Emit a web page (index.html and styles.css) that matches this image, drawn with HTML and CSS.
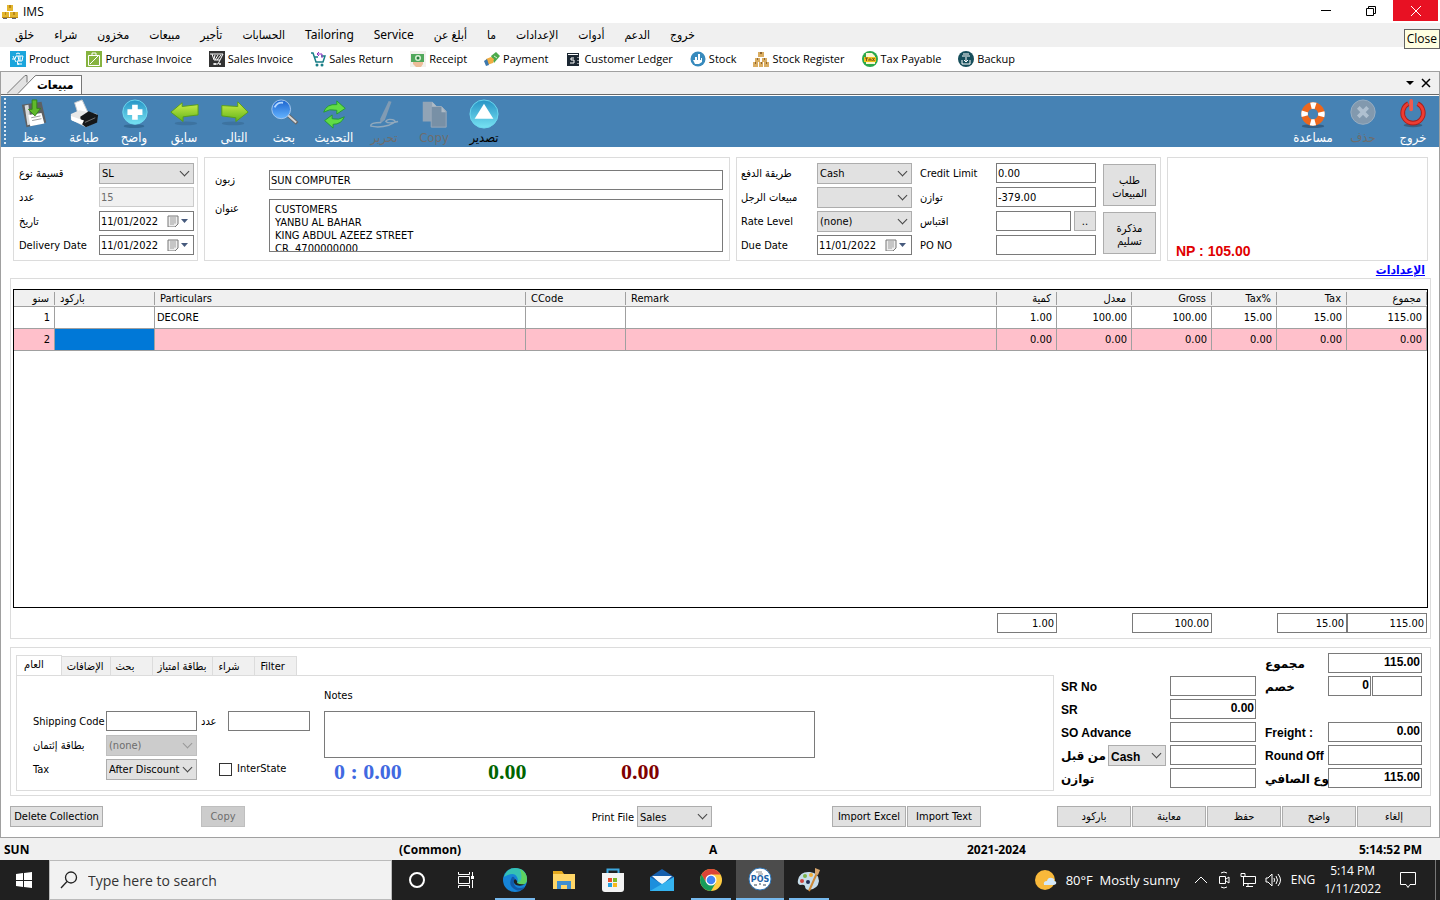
FILE: index.html
```html
<!DOCTYPE html>
<html lang="en">
<head>
  <meta charset="UTF-8" />
  <meta name="viewport" content="width=device-width, initial-scale=1.0"/>
  <title>IMS</title>
  <link rel="stylesheet" href="styles.css">
</head>
<body>
  <header class="titlebar">
    <svg class="app-icon" viewBox="0 0 16 16"><path fill="#e3b62f" d="M5 1h6v6H5zM0 8h7v6H0zM8 8h8v6H8z"/><path fill="#b98718" d="M7 1h2v3H7zM3 8h1v3H3zM11 8h2v3h-2zM0 13h16v1H0z"/><path fill="#5d6570" d="M1 14h4v1H1zM10 14h4v1h-4z"/></svg>
    <span class="app-title">IMS</span>
    <div class="window-controls">
      <button aria-label="Minimize"><svg width="12" height="12" viewBox="0 0 12 12"><path d="M1 5.500h10" stroke="#000"/></svg></button>
      <button aria-label="Restore"><svg width="12" height="12" viewBox="0 0 12 12"><path d="M1.500 3.500h7v7h-7zM3.500 3v-1.500h7v7H9" fill="none" stroke="#000"/></svg></button>
      <button class="close" aria-label="Close"><svg width="12" height="12" viewBox="0 0 12 12"><path d="M1 1l10 10M11 1L1 11" stroke="#fff"/></svg></button>
    </div>
    <div class="tooltip">Close</div>
  </header>

  <nav class="menu">
    <a href="#">خلق</a>
    <a href="#">شراء</a>
    <a href="#">مخزون</a>
    <a href="#">مبيعات</a>
    <a href="#">تأجير</a>
    <a href="#">الحسابات</a>
    <a href="#">Tailoring</a>
    <a href="#">Service</a>
    <a href="#">أبلغ عن</a>
    <a href="#">ما</a>
    <a href="#">الإعدادات</a>
    <a href="#">أدوات</a>
    <a href="#">الدعم</a>
    <a href="#">خروج</a>
  </nav>

  <nav class="quick">
    <button><svg viewBox="0 0 16 16"><path fill="#1ba5dc" d="M0 0h16v16H0z"/><path d="M2 8h3l1-3h7l-1 5H7l1 3h4M8 5l1 5M10 5v5M3 5l3 6M6 3l2-1 2 1" fill="none" stroke="#fff"/><circle cx="8" cy="13" r="1" fill="#fff"/></svg>Product</button>
    <button><svg viewBox="0 0 16 16"><path fill="#86b340" d="M0 0h16v16H0z"/><path d="M2.500 4.500h11v10h-11zM6 4V2h4v2M4 13l8-8" fill="none" stroke="#fff"/></svg>Purchase Invoice</button>
    <button><svg viewBox="0 0 16 16"><path fill="#333" d="M0 0h16v16H0z"/><path d="M1 3h13l-5 10H4M3 3l2 6h6M6 4l-1 4M9 4l-3 5M12 4l-4 5" fill="none" stroke="#fff"/><circle cx="6" cy="13" r="1" fill="#fff"/><circle cx="11" cy="13" r="1" fill="#fff"/></svg>Sales Invoice</button>
    <button><svg viewBox="0 0 16 16"><path d="M1 2h2l3 9h7l2-6h-4M4 6h4" fill="none" stroke="#187e86" stroke-width="1.500"/><path d="M12 7V3H7M9 1L7 3l2 2" fill="none" stroke="#8e2bbd"/><circle cx="7" cy="14" r="1.500" fill="#187e86"/><circle cx="12" cy="14" r="1.500" fill="#187e86"/></svg>Sales Return</button>
    <button><svg viewBox="0 0 16 16"><path fill="#f3f1ed" d="M0 0h16v16H0z"/><path fill="#edbd99" d="M3 8h10v5l-2 3H6l-3-3z"/><path fill="#51a85b" d="M1 3h13v8H1z"/><circle cx="8" cy="7" r="3" fill="#d9f0d4"/><circle cx="8" cy="7" r="1.500" fill="#277c3c"/></svg>Receipt</button>
    <button><svg viewBox="0 0 16 16"><path fill="#4caa4b" d="M7 5l5-4 4 4-6 7z"/><path d="M10 5l3 2" stroke="#d5efcd"/><path fill="#f0ad42" d="M2 8l5-2 3 2-1 4-6 2z"/><path fill="#3d78ad" d="M0 10l3-2 2 6-3 1z"/></svg>Payment</button>
    <button><svg viewBox="0 0 16 16"><path fill="#1c2833" d="M2 2h12v13H2z"/><path d="M3 3.500h10" stroke="#fff"/><path d="M9 7H6v2h3v3H5" fill="none" stroke="#fff"/><path d="M13 6v1M13 9v1M13 12v1" stroke="#fff"/></svg>Customer Ledger</button>
    <button><svg viewBox="0 0 16 16"><circle cx="8" cy="8" r="7.500" fill="#378abd"/><path fill="#fff" d="M3 9h2V6h2v3h1V3h2v6h1V7h1v4l-3 2H5z"/></svg>Stock</button>
    <button><svg viewBox="0 0 16 16"><path fill="#d9ad62" d="M5 1h6v5H5zM2 7h5v4H2zM9 7h5v4H9zM0 11h5v5H0zM6 11h4v5H6zM11 11h5v5h-5z"/><path fill="#8f642d" d="M7 1h2v2H7zM4 7h1v2H4zM11 7h1v2h-1zM2 11h1v2H2zM8 11h1v2H8zM13 11h1v2h-1z"/></svg>Stock Register</button>
    <button><svg viewBox="0 0 16 16"><circle cx="8" cy="8" r="8" fill="#2ba94b"/><path fill="#fff7d2" d="M4 2h6l3 3v8H4z"/><path fill="#f2c31b" d="M2 6h12v5H2z"/><path d="M3 7h3M4.500 7v3M7 10V8h2v2M10.500 7l2 3M12.500 7l-2 3" stroke="#71531a" fill="none"/></svg>Tax Payable</button>
    <button><svg viewBox="0 0 16 16"><circle cx="8" cy="8" r="8" fill="#164e5b"/><path d="M4 5h8M5 3h6M8 6v5M6 9l2 2 2-2M4 9v4h8V9" fill="none" stroke="#fff"/></svg>Backup</button>
  </nav>

  <main class="window">
    <div class="doc-tabs">
      <svg class="doc-slant" viewBox="0 0 30 20"><path fill="#e2e2e2" d="M0 20L18 1h2v19z"/><path fill="#fff" d="M11 20L28 2q1-1 2-1v19z"/><path d="M0 19.500L18 1.500h2v7M11 19.500L28 2q1-1 2-.500" fill="none" stroke="#777"/></svg>
      <button class="doc-tab">مبيعات</button>
      <div class="doc-controls">
        <button aria-label="Windows"><svg width="8" height="5" viewBox="0 0 8 5"><path d="M0 0h8L4 4z"/></svg></button>
        <button aria-label="Close tab"><svg width="10" height="10" viewBox="0 0 10 10"><path d="M1 1l8 8M9 1L1 9" stroke="#000" stroke-width="1.500"/></svg></button>
      </div>
    </div>

    <div class="toolbar">
      <span class="grip"></span>
      <button><svg viewBox="0 0 32 32"><path fill="#5d6063" d="M3 6l21-3 5 22-21 5z"/><path fill="#d8dadb" d="M6 7l4-1 3 21-4 1z"/><path fill="#fff" d="M10 17l14-2 3 11-15 3z"/><path d="M13 20l10-2M14 23l10-2" stroke="#999"/><path fill="#60b92b" stroke="#328616" d="M14 1h5v9h4l-6 8-7-7h4z"/></svg>حفظ</button>
      <button><svg viewBox="0 0 32 32"><path fill="#fff" stroke="#ccc" d="M6 4l8-3 6 13-10 3z"/><path fill="#e7e7e7" d="M2 16l9-4 19 4v8l-12 6L2 22z"/><path fill="#151719" d="M12 19l9-6 10 4-1 8-12 5-5-4z"/><path fill="#fff" d="M2 18l14 5-2 4-11-4z"/><path d="M17 25l11-5" stroke="#777"/></svg>طباعة</button>
      <button><svg viewBox="0 0 32 32"><ellipse cx="16" cy="29" rx="11" ry="2" fill="#356a96"/><circle cx="17" cy="14" r="13" fill="url(#cyan)" stroke="#6dd9ef"/><path fill="#fff" d="M14 6h6v5h5v6h-5v5h-6v-5H9v-6h5z"/></svg>واضح</button>
      <button><svg viewBox="0 0 32 32"><ellipse cx="18" cy="26" rx="12" ry="2" fill="#3d73a0"/><path fill="url(#lime)" stroke="#599d18" d="M2 14L14 4v4l17-2v11l-16 2v5z"/></svg>سابق</button>
      <button><svg viewBox="0 0 32 32"><ellipse cx="15" cy="26" rx="12" ry="2" fill="#3d73a0"/><path fill="url(#lime)" stroke="#599d18" d="M31 14L20 3v5L3 7v11l15 2v4z"/></svg>التالى</button>
      <button><svg viewBox="0 0 32 32"><path d="M20 17l10 9" stroke="#666" stroke-width="4"/><path d="M20 17l9 8" stroke="#d8d8d8" stroke-width="2"/><circle cx="13" cy="11" r="10" fill="url(#blue)" stroke="#a8c9ef"/><path d="M6 9q3-6 9-5" fill="none" stroke="#b1d7ff" stroke-width="2"/></svg>بحث</button>
      <button><svg viewBox="0 0 32 32"><path fill="#61dc45" stroke="#249b32" d="M5 14q3-9 14-8V2l9 8-9 6v-4q-8-2-14 2zM27 19q-3 8-12 8v4l-9-8 8-6v4q7 2 13-2z"/></svg>التحديث</button>
      <button class="off" disabled><svg viewBox="0 0 32 32"><path fill="#819bb3" d="M12 21L21 2l3 1-7 19-5 4z"/><path d="M13 25q-12 0-11 4 9 2 19-1 11-4 4-6-6-1-7 2 3 3 13 0" fill="none" stroke="#91a9bd" stroke-width="1.500"/></svg>تحرير</button>
      <button class="off" disabled><svg viewBox="0 0 32 32"><path fill="#91a4b6" d="M4 3h10l5 5v16H4z"/><path fill="#7890a6" stroke="#9aaaba" d="M13 8h11l5 5v17H13z"/><path fill="#afbbc6" d="M24 8v6h5zM14 3v5h5z"/></svg>Copy</button>
      <button class="dark"><svg viewBox="0 0 32 32"><circle cx="16" cy="16" r="15" fill="url(#cyan)" stroke="#6dd9ef"/><path fill="#fff" d="M16 5l10 16H6z"/></svg>تصدير</button>
      <span class="spacer"></span>
      <button><svg viewBox="0 0 32 32"><ellipse cx="16" cy="29" rx="12" ry="2" fill="#315f87"/><circle cx="16" cy="16" r="9" fill="none" stroke="#ed671c" stroke-width="7"/><circle cx="16" cy="16" r="9" fill="none" stroke="#fff" stroke-width="7" stroke-dasharray="5 9.137" stroke-dashoffset="2.500"/></svg>مساعدة</button>
      <button class="off" disabled><svg viewBox="0 0 32 32"><circle cx="16" cy="14" r="13" fill="#8299ae" stroke="#9aafc2"/><path d="M11 9l10 10M21 9L11 19" stroke="#afc0d0" stroke-width="4"/></svg>حذف</button>
      <button><svg viewBox="0 0 32 32"><ellipse cx="16" cy="28" rx="10" ry="2" fill="#3a6082"/><path d="M11 5a11 11 0 1 0 10 0" fill="none" stroke="#a91f1c" stroke-width="5"/><path d="M11 5a11 11 0 1 0 10 0" fill="none" stroke="#ed3c32" stroke-width="3"/><path d="M14 2v9" stroke="#ef5b4e" stroke-width="4" stroke-linecap="round"/></svg>خروج</button>
    </div>

    <div class="content">
      <section class="panels">
        <div class="panel voucher">
          <label for="vtype">قسيمة نوع</label>
          <span class="combo"><select id="vtype"><option>SL</option></select></span>
          <label for="number">عدد</label>
          <input id="number" value="15" disabled>
          <label for="date">تاريخ</label>
          <span class="date"><input id="date" value="11/01/2022"><svg viewBox="0 0 22 12"><path d="M1 1h10v8l-3 3H1z" fill="#eee" stroke="#777"/><path d="M3 3h6M3 5h6M3 7h6M3 9h4M4 2v8M6 2v8M8 2v7" stroke="#aaa" stroke-width=".700"/><path d="M14 4h7l-3.500 4z" fill="#465a7d"/></svg></span>
          <label for="delivery">Delivery Date</label>
          <span class="date"><input id="delivery" value="11/01/2022"><svg viewBox="0 0 22 12"><path d="M1 1h10v8l-3 3H1z" fill="#eee" stroke="#777"/><path d="M3 3h6M3 5h6M3 7h6M3 9h4M4 2v8M6 2v8M8 2v7" stroke="#aaa" stroke-width=".700"/><path d="M14 4h7l-3.500 4z" fill="#465a7d"/></svg></span>
        </div>

        <div class="panel customer">
          <label for="customer">زبون</label>
          <input id="customer" value="SUN COMPUTER">
          <label for="address">عنوان</label>
          <textarea id="address">CUSTOMERS
YANBU AL BAHAR
KING ABDUL AZEEZ STREET
CR  4700000000</textarea>
        </div>

        <div class="panel payment">
          <div class="payment-fields">
            <label for="paymode">طريقة الدفع</label>
            <span class="combo"><select id="paymode"><option>Cash</option></select></span>
            <label for="credit" class="second">Credit Limit</label>
            <input id="credit" value="0.00">
            <label for="salesman">مبيعات الرجل</label>
            <span class="combo"><select id="salesman"><option></option></select></span>
            <label for="balance" class="second">توازن</label>
            <input id="balance" value="-379.00">
            <label for="rate">Rate Level</label>
            <span class="combo"><select id="rate"><option>(none)</option></select></span>
            <label for="quote" class="second">اقتباس</label>
            <span class="quote"><input id="quote"><button class="btn">..</button></span>
            <label for="due">Due Date</label>
            <span class="date"><input id="due" value="11/01/2022"><svg viewBox="0 0 22 12"><path d="M1 1h10v8l-3 3H1z" fill="#eee" stroke="#777"/><path d="M3 3h6M3 5h6M3 7h6M3 9h4M4 2v8M6 2v8M8 2v7" stroke="#aaa" stroke-width=".700"/><path d="M14 4h7l-3.500 4z" fill="#465a7d"/></svg></span>
            <label for="po" class="second">PO NO</label>
            <input id="po">
          </div>
          <div class="payment-buttons">
            <button class="btn">طلب المبيعات</button>
            <button class="btn">مذكرة تسليم</button>
          </div>
        </div>

        <div class="panel profit">NP : 105.00</div>
      </section>

      <div class="settings"><a href="#">الإعدادات</a></div>

      <section class="items">
        <div class="grid">
          <table>
            <colgroup>
              <col class="c-no"><col class="c-100"><col><col class="c-100"><col>
              <col class="c-60"><col class="c-75"><col class="c-80"><col class="c-65"><col class="c-70"><col class="c-80">
            </colgroup>
            <thead>
              <tr>
                <th class="num">سنو</th><th>باركود</th><th>Particulars</th><th>CCode</th><th>Remark</th>
                <th class="num">كمية</th><th class="num">معدل</th><th class="num">Gross</th><th class="num">Tax%</th><th class="num">Tax</th><th class="num">مجموع</th>
              </tr>
            </thead>
            <tbody>
              <tr>
                <td class="num">1</td><td></td><td>DECORE</td><td></td><td></td>
                <td class="num">1.00</td><td class="num">100.00</td><td class="num">100.00</td><td class="num">15.00</td><td class="num">15.00</td><td class="num">115.00</td>
              </tr>
              <tr class="current">
                <td class="num">2</td><td class="selected"></td><td></td><td></td><td></td>
                <td class="num">0.00</td><td class="num">0.00</td><td class="num">0.00</td><td class="num">0.00</td><td class="num">0.00</td><td class="num">0.00</td>
              </tr>
            </tbody>
          </table>
        </div>
        <div class="sums">
          <input class="sum-qty" aria-label="Total quantity" value="1.00">
          <input class="sum-gross" aria-label="Total gross" value="100.00">
          <input class="sum-tax" aria-label="Total tax" value="15.00">
          <input class="sum-total" aria-label="Total" value="115.00">
        </div>
      </section>

      <section class="details">
        <div class="tabs">
          <div class="tab-list">
            <button class="tab active">العام</button>
            <button class="tab">الإضافات</button>
            <button class="tab">بحث</button>
            <button class="tab">بطاقة امتياز</button>
            <button class="tab">شراء</button>
            <button class="tab">Filter</button>
          </div>
          <div class="tab-page">
            <div class="shipping">
              <label for="ship">Shipping Code</label>
              <input id="ship">
              <label for="shipno" class="mid">عدد</label>
              <input id="shipno">
              <label for="card">بطاقة إئتمان</label>
              <span class="combo disabled"><select id="card" disabled><option>(none)</option></select></span>
              <label for="tax" class="tax-label">Tax</label>
              <span class="combo"><select id="tax"><option>After Discount</option></select></span>
              <span class="check"><input type="checkbox" id="inter"><label for="inter">InterState</label></span>
            </div>
            <div class="notes">
              <label for="notes">Notes</label>
              <textarea id="notes"></textarea>
              <div class="readouts">
                <span class="blue">0 : 0.00</span>
                <span class="green">0.00</span>
                <span class="maroon">0.00</span>
              </div>
            </div>
          </div>
        </div>

        <div class="totals">
          <div class="col-left">
            <label for="srno">SR No</label><input id="srno">
            <label for="sr">SR</label><input id="sr" value="0.00">
            <label for="so">SO Advance</label><input id="so">
            <div class="paid"><label for="paid">دفعات من قبل</label><span class="combo"><select aria-label="Paid by"><option>Cash</option></select></span></div><input id="paid">
            <label for="bal">توازن</label><input id="bal">
          </div>
          <div class="col-right">
            <label for="sum">مجموع</label><input id="sum" value="115.00">
            <label for="disc">خصم</label>
            <span class="discount"><input id="disc" value="0"><input aria-label="Discount amount"></span>
            <span class="blank"></span>
            <label for="freight">Freight :</label><input id="freight" value="0.00">
            <label for="round">Round Off</label><input id="round">
            <label for="net">مجموع الصافي</label><input id="net" value="115.00">
          </div>
        </div>
      </section>

      <footer class="actions">
        <button class="btn delete">Delete Collection</button>
        <button class="btn copy" disabled>Copy</button>
        <span class="print"><label for="print">Print File</label><span class="combo"><select id="print"><option>Sales</option></select></span></span>
        <div class="imports">
          <button class="btn">Import Excel</button>
          <button class="btn">Import Text</button>
        </div>
        <div class="commands">
          <button class="btn">باركود</button>
          <button class="btn">معاينة</button>
          <button class="btn">حفظ</button>
          <button class="btn">واضح</button>
          <button class="btn">إلغاء</button>
        </div>
      </footer>
    </div>
  </main>

  <div class="status">
    <span>SUN</span><span>(Common)</span><span>A</span><span>2021-2024</span><span>5:14:52 PM</span>
  </div>

  <div class="taskbar">
    <button class="task" aria-label="Start"><svg width="16" height="16" viewBox="0 0 16 16"><path fill="#fff" d="M0 2l7-1v7H0zM8 1l8-1v8H8zM0 9h7v6l-7-1zM8 9h8v7l-8-1z"/></svg></button>
    <div class="search">
      <svg width="18" height="18" viewBox="0 0 18 18"><circle cx="11" cy="6.500" r="5.500" fill="none" stroke="#222" stroke-width="1.300"/><path d="M7 10.500L1 17" stroke="#222" stroke-width="1.300"/></svg>
      <input placeholder="Type here to search" aria-label="Search">
    </div>
    <button class="task" aria-label="Cortana"><svg width="18" height="18" viewBox="0 0 18 18"><circle cx="9" cy="9" r="7" fill="none" stroke="#fff" stroke-width="2"/></svg></button>
    <button class="task" aria-label="Task view"><svg width="18" height="18" viewBox="0 0 18 18"><path d="M1.500 1v2.500h11V1M1.500 5.500h11v7h-11zM1.500 17v-2.500h11V17M15.500 1v4M15.500 9v8" fill="none" stroke="#fff"/><path fill="#fff" d="M14 5h3v3h-3z"/></svg></button>
    <button class="task open" aria-label="Edge"><svg width="24" height="24" viewBox="0 0 24 24"><circle cx="12" cy="12" r="12" fill="#1684d7"/><path fill="#35c1b4" d="M1 9Q4 0 12 0q11 0 12 11 0 6-7 6-4 0-4-2 3-2 1-6-3-6-13 0z"/><path fill="#5ed25f" d="M17 1q7 4 7 10 0 6-7 6-4 0-3-2 7-1 3-14z"/><path fill="#1159a8" d="M9 9q-5 9 4 13 5 2 9-3-9 3-11-3-1-3 1-5-1-3-3-2z"/><path fill="#202020" d="M12 11q-3 3 1 6 5 2 9-1-5 1-8-1 1-2-2-4z"/></svg></button>
    <button class="task" aria-label="File Explorer"><svg width="22" height="20" viewBox="0 0 22 20"><path fill="#e5a91d" d="M0 1h9l2 3h11v4H0z"/><path fill="#ffd667" d="M0 4h22v15H0z"/><path fill="#3e8ed0" d="M4 11h14v8h-4v-4H8v4H4z"/></svg></button>
    <button class="task" aria-label="Store"><svg width="24" height="24" viewBox="0 0 24 24"><path d="M6.500 6V1.500h11V6" fill="none" stroke="#3ca8df" stroke-width="2"/><path fill="#f3f3f3" d="M1 5h22v16q0 3-3 3H4q-3 0-3-3z"/><path fill="#e84e2d" d="M7 10h4v4H7z"/><path fill="#7cb928" d="M12 10h4v4h-4z"/><path fill="#23a1e2" d="M7 15h4v4H7z"/><path fill="#f8b91c" d="M12 15h4v4h-4z"/></svg></button>
    <button class="task" aria-label="Mail"><svg width="24" height="22" viewBox="0 0 24 22"><path fill="#155eac" d="M0 8l12-8 12 8v5H0z"/><path fill="#f4f8fb" d="M2 7h20l-10 9z"/><path fill="#1c8fdd" d="M0 8l24 14H0z"/><path fill="#35b3ef" d="M24 8v14H0z"/></svg></button>
    <button class="task open" aria-label="Chrome"><svg width="22" height="22" viewBox="0 0 22 22"><circle cx="11" cy="11" r="11" fill="#ffcd42"/><path fill="#dc4437" d="M1.500 5.500A11 11 0 0 1 20.500 5.500H11L6.200 13.700z"/><path fill="#179c5b" d="M1.500 5.500A11 11 0 0 0 11 22l4.800-8.300-9.500 0z"/><circle cx="11" cy="11" r="5.500" fill="#fff"/><circle cx="11" cy="11" r="4.300" fill="#4285f4"/></svg></button>
    <button class="task current" aria-label="POS"><svg width="24" height="24" viewBox="0 0 24 24"><circle cx="12" cy="12" r="11" fill="#fff" stroke="#2e76b9"/><path d="M8 5h6M10 7h5" stroke="#888"/><text x="12" y="15" text-anchor="middle" class="pos-text">POS</text><path d="M6 18h3M11 17h2M15 18h3" stroke="#345"/></svg></button>
    <button class="task open" aria-label="Paint"><svg width="24" height="24" viewBox="0 0 24 24"><path fill="#c7ddea" d="M1 12Q3 3 13 4q9 1 9 9-1 8-10 9-4 0-4-4-1-2-5-1-3-1-2-5z"/><circle cx="5" cy="13" r="2" fill="#cf4640"/><circle cx="8" cy="8" r="2" fill="#7bb449"/><circle cx="14" cy="7" r="2" fill="#f1ae3b"/><circle cx="11" cy="14" r="2" fill="#202c55"/><path d="M12 23l8-18" stroke="#ce8a39" stroke-width="2"/><path fill="#d7a56d" d="M18 0l5 2-2 5-3-1z"/></svg></button>
    <div class="tray">
      <svg width="22" height="20" viewBox="0 0 22 20"><circle cx="10" cy="10" r="10" fill="#f8b83a"/><path fill="#d4e8f8" d="M9 15q-1-4 3-4 1-4 5-3 3 1 2 3 3 0 2 3l-2 1z"/></svg>
      <span class="weather">80°F&nbsp; Mostly sunny</span>
      <svg width="14" height="14" viewBox="0 0 14 14"><path d="M1 10l6-6 6 6" fill="none" stroke="#fff"/></svg>
      <svg width="14" height="18" viewBox="0 0 14 18"><path d="M2.500 5.500h6v7h-6zM9 8l3-2v6l-3-2M4 2q3-2 6 0M4 16q3 2 6 0" fill="none" stroke="#fff"/></svg>
      <svg width="16" height="16" viewBox="0 0 16 16"><path d="M4 4.500h11.500v7H4M1 1.500h4v3H1zM3.500 5v9M8 12v2M6 14.500h7" fill="none" stroke="#fff"/></svg>
      <svg width="17" height="16" viewBox="0 0 17 16"><path d="M1 6h2l4-4v12l-4-4H1zM9 6q1 2 0 4M11 4q3 4 0 8M13 2q5 6 0 12" fill="none" stroke="#fff"/></svg>
      <span class="lang">ENG</span>
      <span class="clock"><span>5:14 PM</span><span>1/11/2022</span></span>
      <svg class="notify" width="18" height="18" viewBox="0 0 18 18"><path d="M1.500 1.500h15v12H11l-2 3-2-3H1.500z" fill="none" stroke="#fff"/></svg>
      <span class="desktop"></span>
    </div>
  </div>

  <!-- shared gradients for the toolbar icons -->
  <svg class="defs" width="0" height="0">
    <defs>
      <linearGradient id="cyan" x1="0" y1="0" x2="0" y2="1"><stop offset="0" stop-color="#2693c5"/><stop offset="1" stop-color="#77e2f2"/></linearGradient>
      <linearGradient id="lime" x1="0" y1="0" x2="0" y2="1"><stop offset="0" stop-color="#cdee4a"/><stop offset="1" stop-color="#62b51b"/></linearGradient>
      <linearGradient id="blue" x1="0" y1="0" x2="0" y2="1"><stop offset="0" stop-color="#1a63cf"/><stop offset="1" stop-color="#65b4ff"/></linearGradient>
    </defs>
  </svg>
</body>
</html>
```

FILE: styles.css
```css
* {
  box-sizing: border-box;
}

body {
  margin: 0;
  min-height: 100vh;
  display: flex;
  flex-direction: column;
  background: #fff;
  color: #000;
  font-family: "DejaVu Sans Condensed", "DejaVu Sans", sans-serif;
  font-size: 11px;
  line-height: 14px;
}

button,
input,
select,
textarea {
  font: inherit;
  color: inherit;
  margin: 0;
  border-radius: 0;
}

button {
  border: none;
  background: none;
  padding: 0;
}

svg {
  flex: none;
  display: block;
}

label {
  padding-top: 2px;
  white-space: nowrap;
}

/* title bar */
.titlebar {
  position: relative;
  display: flex;
  align-items: center;
  height: 23px;
  padding-left: 2px;
  font-family: "Open Sans", sans-serif;
  font-size: 12px;
}

.app-icon {
  width: 16px;
  height: 16px;
  margin-right: 5px;
}

.window-controls {
  display: flex;
  align-self: flex-start;
  margin-left: auto;
  padding-right: 2px;
}

.window-controls button {
  display: flex;
  justify-content: center;
  align-items: center;
  width: 45px;
  height: 21px;
}

.window-controls .close {
  background: #e81123;
}

.tooltip {
  position: absolute;
  top: 29px;
  right: 0;
  z-index: 2;
  padding: 2px;
  border: 1px solid #646464;
  background: #ffffe1;
}

/* menus */
.menu {
  display: flex;
  align-items: center;
  gap: 20px;
  height: 24px;
  padding-left: 15px;
  background: #f0f0f0;
  font-family: "Noto Sans", "DejaVu Sans Condensed", sans-serif;
  font-size: 12px;
}

.menu a {
  color: #000;
  text-decoration: none;
}

.quick {
  display: flex;
  align-items: center;
  gap: 17px;
  height: 24px;
  padding-left: 10px;
  font-family: "Open Sans", sans-serif;
  font-size: 11px;
}

.quick button {
  display: flex;
  align-items: center;
  gap: 3px;
  white-space: nowrap;
}

.quick svg {
  width: 16px;
  height: 16px;
}

/* document window */
.window {
  flex: 1;
  display: flex;
  flex-direction: column;
  border: 1px solid #a0a0a0;
}

.doc-tabs {
  display: flex;
  align-items: flex-end;
  height: 23px;
  padding-left: 6px;
  border-bottom: 1px solid #696969;
  background: #f0f0f0;
}

.doc-slant {
  width: 30px;
  height: 20px;
}

.doc-tab {
  height: 19px;
  padding: 0 7px 0 0;
  border-top: 1px solid #777;
  border-right: 1px solid #777;
  background: #fff;
  font-size: 12px;
  font-weight: bold;
}

.doc-controls {
  display: flex;
  align-items: center;
  align-self: center;
  gap: 7px;
  margin-left: auto;
  padding-right: 8px;
}

.toolbar {
  display: flex;
  height: 52px;
  padding-right: 1px;
  border-top: 1px solid #fff;
  background: #4682b4;
}

.grip {
  width: 2px;
  height: 46px;
  margin: 2px 3px;
  background: repeating-linear-gradient(#dbe8f3 0 2px, #4682b4 2px 4px);
}

.toolbar button {
  display: flex;
  flex-direction: column;
  align-items: center;
  gap: 2px;
  width: 50px;
  padding-top: 3px;
  color: #fff;
  font-size: 13px;
}

.toolbar button svg {
  width: 30px;
  height: 30px;
}

.toolbar .off {
  color: #6d6d6d;
}

.toolbar .dark {
  color: #000;
}

.spacer {
  flex: 1;
}

.content {
  flex: 1;
  display: flex;
  flex-direction: column;
  padding: 10px 8px 0 9px;
}

/* form controls */
input,
textarea {
  min-width: 0;
  width: 100%;
  height: 20px;
  padding: 0 2px 0 1px;
  border: 1px solid #7a7a7a;
  background: #fff;
}

input:disabled {
  border-color: #ccc;
  background: #f0f0f0;
  color: #6d6d6d;
}

textarea {
  display: block;
  resize: none;
  overflow: hidden;
}

.combo {
  position: relative;
  display: block;
  height: 21px;
}

.combo select {
  appearance: none;
  width: 100%;
  height: 100%;
  padding: 2px 16px 0 2px;
  border: 1px solid #adadad;
  background: #e1e1e1;
}

.combo::after {
  content: "";
  position: absolute;
  top: 5px;
  right: 6px;
  width: 6px;
  height: 6px;
  border: solid #444;
  border-width: 0 1px 1px 0;
  transform: rotate(45deg);
}

.combo select:disabled {
  border-color: #bfbfbf;
  background: #ccc;
  color: #6d6d6d;
  opacity: 1;
}

.combo.disabled::after {
  border-color: #999;
}

.date {
  display: flex;
  align-items: center;
  height: 20px;
  padding-right: 4px;
  border: 1px solid #7a7a7a;
}

.date input {
  height: 18px;
  padding: 1px 1px 0;
  border: none;
}

.date svg {
  width: 22px;
  height: 12px;
}

.btn {
  height: 21px;
  padding-top: 1px;
  border: 1px solid #adadad;
  background: #e1e1e1;
  white-space: nowrap;
}

.btn:disabled {
  border-color: #bfbfbf;
  background: #ccc;
  color: #6d6d6d;
}

/* top panels */
.panels {
  display: flex;
  gap: 6px;
  padding: 0 3px;
}

.panel {
  height: 104px;
  border: 1px solid #dcdcdc;
}

.voucher {
  display: grid;
  grid-template-columns: 80px 95px;
  grid-auto-rows: 20px;
  row-gap: 4px;
  align-items: center;
  padding: 5px 3px 0 5px;
}

.customer {
  flex: 1;
  display: grid;
  grid-template-columns: 54px 1fr;
  grid-template-rows: 20px 53px;
  row-gap: 9px;
  padding: 12px 6px 0 10px;
}

.customer textarea {
  height: 53px;
  padding: 3px 5px 0;
  line-height: 13px;
}

.customer label {
  padding-top: 3px;
}

.payment {
  display: flex;
  gap: 7px;
  padding: 5px 4px 0;
}

.payment-fields {
  display: grid;
  grid-template-columns: 76px 95px 84px 100px;
  grid-auto-rows: 20px;
  row-gap: 4px;
  align-items: center;
}

.second {
  padding-left: 8px;
}

.quote {
  display: flex;
  gap: 3px;
}

.quote .btn {
  flex: none;
  width: 22px;
  height: 20px;
}

.payment-buttons {
  display: flex;
  flex-direction: column;
  gap: 6px;
  padding-top: 1px;
}

.payment-buttons .btn {
  width: 53px;
  height: 42px;
  padding-top: 3px;
  line-height: 13px;
  white-space: normal;
}

.profit {
  display: flex;
  align-items: flex-end;
  width: 261px;
  padding: 0 8px 2px;
  color: #e00000;
  font-family: "Liberation Sans", sans-serif;
  font-size: 14px;
  font-weight: bold;
}

.settings {
  height: 17px;
  padding: 2px 6px 0;
  font-size: 12px;
  font-weight: bold;
  text-align: right;
}

.settings a {
  color: #00f;
}

/* items grid */
.items {
  flex: 1;
  display: flex;
  flex-direction: column;
  padding: 10px 2px 5px;
  border: 1px solid #dcdcdc;
}

.grid {
  flex: 1;
  min-height: 200px;
  border: 1px solid #000;
}

table {
  width: 100%;
  table-layout: fixed;
  border-collapse: separate;
  border-spacing: 0;
}

.c-no { width: 41px; }
.c-60 { width: 60px; }
.c-65 { width: 65px; }
.c-70 { width: 70px; }
.c-75 { width: 75px; }
.c-80 { width: 80px; }
.c-100 { width: 100px; }

th {
  height: 17px;
  padding: 2px 6px 0 5px;
  border-bottom: 1px solid #a0a0a0;
  background: linear-gradient(#a0a0a0, #a0a0a0) right 2px / 1px 13px no-repeat #f0f0f0;
  font-weight: normal;
  line-height: 14px;
  text-align: left;
}

td {
  height: 22px;
  padding: 1px 4px 0 2px;
  border-right: 1px solid #a0a0a0;
  border-bottom: 1px solid #a0a0a0;
}

.num {
  text-align: right;
}

.current td {
  background: #ffc0cb;
}

.current .selected {
  background: #0078d7;
}

.sums {
  display: grid;
  grid-template-columns: 1fr 60px 75px 80px 65px 70px 80px;
  padding: 5px 1px 0 0;
}

.sums input {
  text-align: right;
}

.sum-qty { grid-column: 2; }
.sum-gross { grid-column: 4; }
.sum-tax { grid-column: 6; }
.sum-total { grid-column: 7; }

/* details */
.details {
  display: flex;
  margin-top: 8px;
  padding: 5px 8px 4px 5px;
  border: 1px solid #dcdcdc;
}

.tabs {
  flex: 1;
  display: flex;
  flex-direction: column;
  padding-top: 2px;
}

.tab-list {
  display: flex;
  align-items: flex-end;
}

.tab {
  height: 19px;
  min-width: 42px;
  padding: 2px 6px 0 5px;
  border: 1px solid #dcdcdc;
  border-width: 1px 1px 0 0;
  background: #f0f0f0;
  text-align: left;
  white-space: nowrap;
}

.tab.active {
  height: 21px;
  margin-bottom: -1px;
  padding: 0 17px 2px 7px;
  border-width: 1px 1px 0 1px;
  background: #fff;
}

.tab-page {
  flex: 1;
  display: flex;
  gap: 14px;
  padding-left: 16px;
  border: 1px solid #dcdcdc;
}

.shipping {
  display: grid;
  grid-template-columns: 73px 91px 31px 82px;
  grid-auto-rows: 20px;
  row-gap: 4px;
  align-items: center;
  padding-top: 35px;
}

.mid {
  padding-left: 4px;
}

.tax-label {
  grid-column: 1;
}

.check {
  grid-column: 3 / 5;
  display: flex;
  align-items: center;
  gap: 5px;
  padding-left: 22px;
}

.check label {
  padding-top: 0;
}

.check input {
  appearance: none;
  flex: none;
  width: 13px;
  height: 13px;
  border-color: #333;
}

.notes {
  flex: 0 1 491px;
  padding-top: 11px;
}

.notes label {
  display: block;
  height: 24px;
}

.notes textarea {
  height: 47px;
}

.readouts {
  display: grid;
  grid-template-columns: 154px 133px auto;
  padding: 2px 10px;
  font-family: "Liberation Serif", serif;
  font-size: 22px;
  line-height: 24px;
  font-weight: bold;
}

.blue { color: #4169e1; }
.green { color: #006400; }
.maroon { color: #800000; }

.totals {
  display: flex;
  gap: 9px;
  padding: 0 0 3px 7px;
  font-family: "Liberation Sans", "DejaVu Sans", sans-serif;
  font-size: 12px;
  font-weight: bold;
}

.totals input {
  position: relative;
  padding: 0 1px 2px;
  text-align: right;
}

.totals label {
  padding-top: 4px;
}

.col-left,
.col-right {
  display: grid;
  grid-auto-rows: 20px;
  row-gap: 3px;
  align-content: start;
}

.col-left {
  grid-template-columns: 109px 86px;
  padding-top: 23px;
}

.col-right {
  grid-template-columns: 63px 94px;
}

.blank {
  grid-column: 1 / 3;
}

/* the long label runs on beneath the drop-down */
.paid {
  display: flex;
  padding-right: 4px;
}

.paid label {
  flex: 1;
  width: 0;
}

.paid .combo {
  flex: none;
  width: 58px;
}

.discount {
  display: grid;
  grid-template-columns: 43px 1fr;
  gap: 1px;
}

/* bottom buttons */
.actions {
  display: flex;
  padding: 10px 0;
}

.delete {
  width: 93px;
}

.copy {
  width: 44px;
  margin-left: 98px;
}

.print {
  display: flex;
  align-items: center;
  gap: 3px;
  margin-left: auto;
}

.print .combo {
  width: 75px;
}

.imports,
.commands {
  display: flex;
  gap: 1px;
}

.imports {
  margin-left: 120px;
}

.commands {
  margin-left: 76px;
}

.imports .btn,
.commands .btn {
  width: 74px;
}

.status {
  display: grid;
  grid-template-columns: 395fr 310fr 258fr 313fr 160fr;
  align-items: center;
  height: 22px;
  padding: 1px 0 0 4px;
  background: #f0f0f0;
  font-family: "Open Sans", sans-serif;
  font-size: 12px;
  font-weight: bold;
}

.status span:last-child {
  padding-right: 18px;
  text-align: right;
}

/* taskbar */
.taskbar {
  display: flex;
  gap: 1px;
  height: 40px;
  background: #202020;
  color: #fff;
  font-family: "Open Sans", sans-serif;
}

.task {
  display: flex;
  justify-content: center;
  align-items: center;
  width: 48px;
}

.task.open {
  background: linear-gradient(#76b9ed, #76b9ed) center bottom / 40px 2px no-repeat;
}

.task.current {
  border-bottom: 2px solid #76b9ed;
  background: #4c4c4c;
}

.pos-text {
  fill: #1e63a8;
  font: bold 8px "DejaVu Sans", sans-serif;
}

.search {
  display: flex;
  align-items: center;
  gap: 9px;
  width: 343px;
  padding-left: 10px;
  border: 1px solid #bbb;
  background: #f2f2f2;
}

.search input {
  border: none;
  background: none;
  font-size: 14px;
}

.search input::placeholder {
  color: #333;
}

.tray {
  display: flex;
  align-items: center;
  gap: 9px;
  margin-left: auto;
  font-size: 12px;
}

.weather {
  font-size: 13px;
  margin-right: 5px;
}

.clock {
  display: flex;
  flex-direction: column;
  align-items: center;
  line-height: 18px;
}

.notify {
  margin: 0 9px;
}

.desktop {
  width: 5px;
  height: 40px;
  border-left: 1px solid #777;
}

.defs {
  position: absolute;
}
```
